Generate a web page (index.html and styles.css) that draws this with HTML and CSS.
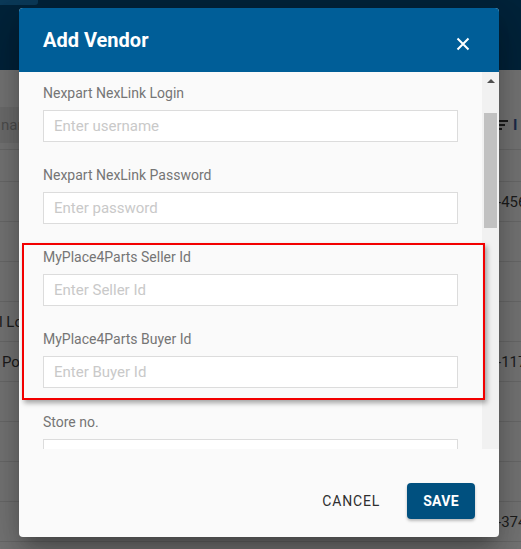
FILE: index.html
```html
<!DOCTYPE html>
<html>
<head>
<meta charset="utf-8">
<link rel="stylesheet" href="styles.css">
</head>
<body>
<div class="app">
  <div class="topbar"><div class="tab"></div></div>
  <div class="toolbar">
    <div class="search">nar</div>
    <div class="tools">
      <svg class="filter" width="11" height="10" viewBox="0 0 11 10"><rect x="0" y="0" width="11" height="2" fill="#1c1c1c"/><rect x="0" y="4" width="8" height="2" fill="#1c1c1c"/><rect x="0" y="8" width="5" height="2" fill="#1c1c1c"/></svg>
      <span class="tool-text">I</span>
    </div>
  </div>
  <div class="rows">
    <div class="row"><span class="c1"></span><span class="c2"></span></div>
    <div class="row"><span class="c1"></span><span class="c2">-456</span></div>
    <div class="row"><span class="c1"></span><span class="c2"></span></div>
    <div class="row"><span class="c1"></span><span class="c2"></span></div>
    <div class="row"><span class="c1 shift">l Lo</span><span class="c2"></span></div>
    <div class="row"><span class="c1">Pot</span><span class="c2">-117</span></div>
    <div class="row"><span class="c1"></span><span class="c2"></span></div>
    <div class="row"><span class="c1"></span><span class="c2"></span></div>
    <div class="row"><span class="c1"></span><span class="c2"></span></div>
    <div class="row"><span class="c1"></span><span class="c2">-374</span></div>
  </div>
</div>

<div class="dialog">
  <div class="dlg-head">
    <h2 class="dlg-title">Add Vendor</h2>
    <svg class="close" width="14" height="14" viewBox="0 0 14 14"><path d="M1.5 1.5 L12.5 12.5 M12.5 1.5 L1.5 12.5" stroke="#fff" stroke-width="2" fill="none"/></svg>
  </div>
  <div class="dlg-body">
    <div class="content">
      <div class="field">
        <label class="lbl">Nexpart NexLink Login</label>
        <div class="inp">Enter username</div>
      </div>
      <div class="field">
        <label class="lbl">Nexpart NexLink Password</label>
        <div class="inp">Enter password</div>
      </div>
      <div class="highlight">
        <div class="field">
          <label class="lbl">MyPlace4Parts Seller Id</label>
          <div class="inp">Enter Seller Id</div>
        </div>
        <div class="field last">
          <label class="lbl">MyPlace4Parts Buyer Id</label>
          <div class="inp">Enter Buyer Id</div>
        </div>
      </div>
      <div class="field">
        <label class="lbl">Store no.</label>
        <div class="inp">Enter store no.</div>
      </div>
    </div>
    <div class="scrollbar">
      <div class="arrow"></div>
      <div class="thumb"></div>
    </div>
  </div>
  <div class="dlg-foot">
    <button class="btn-cancel">CANCEL</button>
    <button class="btn-save">SAVE</button>
  </div>
</div>
</body>
</html>
```
FILE: styles.css
```css
* { box-sizing: border-box; }
html, body {
  margin: 0;
  width: 521px;
  height: 549px;
  overflow: hidden;
}
body {
  background: #767676;
  font-family: Roboto, "Liberation Sans", sans-serif;
  position: relative;
}

/* background app (dimmed) */
.app { width: 521px; }
.topbar {
  height: 70px;
  background: #00233a;
  position: relative;
}
.tab {
  width: 38px;
  height: 5px;
  background: #0b3a59;
  border-bottom-right-radius: 3px;
}
.toolbar {
  height: 80px;
  padding-top: 37px;
  display: flex;
  justify-content: space-between;
  border-bottom: 1px solid #6a6a6a;
}
.search {
  width: 40px;
  height: 36px;
  background: #6e6e6e;
  color: #4e4e4e;
  font-size: 15px;
  line-height: 36px;
  padding-left: 1px;
  overflow: hidden;
}
.tools {
  display: flex;
  align-items: center;
  gap: 5px;
  height: 36px;
  width: 24px;
}
.filter { flex: none; }
.tool-text {
  color: #1b2a4a;
  font-weight: 700;
  font-size: 15px;
}
.row {
  height: 40px;
  border-bottom: 1px solid #6a6a6a;
  display: flex;
  align-items: center;
  justify-content: space-between;
  color: #1c1c1c;
  font-size: 15px;
}
.row:first-child { height: 32px; }
.c1 { width: 40px; white-space: nowrap; overflow: hidden; padding-left: 2px; }
.c1.shift { padding-left: 0; text-indent: -1px; }
.c2 { width: 24px; white-space: nowrap; }

/* dialog overlay */
.dialog {
  position: absolute;
  left: 19px;
  top: 8px;
  width: 480px;
  height: 529px;
  background: #fafafa;
  border-radius: 4px;
  overflow: hidden;
  display: flex;
  flex-direction: column;
  box-shadow: 0 11px 15px -7px rgba(0,0,0,.25), 0 24px 38px 3px rgba(0,0,0,.16), 0 9px 46px 8px rgba(0,0,0,.14);
}
.dlg-head {
  height: 64px;
  flex: none;
  background: #005e98;
  display: flex;
  align-items: center;
  justify-content: space-between;
  padding: 0 29px 0 24px;
}
.dlg-title {
  margin: 0;
  color: #fff;
  font-size: 20px;
  line-height: 24px;
  font-weight: 700;
  padding-bottom: 1px;
}
.close { margin-top: 8px; }

.dlg-body {
  height: 377px;
  flex: none;
  display: flex;
  overflow: hidden;
}
.content {
  width: 463px;
  padding: 13px 24px 0 24px;
  flex: none;
}
.field { margin-bottom: 25px; }
.field.last { margin-bottom: 0; }
.lbl {
  display: block;
  font-size: 14px;
  line-height: 16px;
  color: #757575;
  margin-bottom: 9px;
}
.inp {
  height: 32px;
  width: 415px;
  background: #fff;
  border: 1px solid #dcdcdc;
  font-size: 15px;
  line-height: 30px;
  color: #c9c9c9;
  padding-left: 10px;
}
.highlight {
  position: relative;
  z-index: 2;
  margin: -6px -27px 14px -21px;
  padding: 4px 25px 10px 19px;
  border: 2px solid #f20000;
  box-shadow: 2px 3px 5px rgba(0,0,0,.35);
}
.scrollbar {
  width: 17px;
  flex: none;
  background: #f1f1f1;
  position: relative;
  display: flex;
  flex-direction: column;
  align-items: center;
}
.arrow {
  margin-top: 7px;
  width: 0;
  height: 0;
  border-left: 4px solid transparent;
  border-right: 4px solid transparent;
  border-bottom: 4px solid #505050;
}
.thumb {
  margin-top: 30px;
  width: 13px;
  height: 115px;
  background: #c1c1c1;
}

.dlg-foot {
  flex: 1;
  display: flex;
  justify-content: flex-end;
  align-items: flex-start;
  padding: 34px 24px 0 0;
}
.btn-cancel {
  font-family: inherit;
  background: none;
  border: none;
  font-size: 14px;
  font-weight: 400;
  letter-spacing: 0.8px;
  color: #2e2e2e;
  height: 36px;
  padding: 0 16px;
  margin-right: 11px;
}
.btn-save {
  font-family: inherit;
  background: #00507f;
  color: #fff;
  border: none;
  border-radius: 4px;
  height: 36px;
  width: 68px;
  font-size: 14px;
  font-weight: 700;
  letter-spacing: 0.3px;
  box-shadow: 0 2px 3px rgba(0,0,0,.25);
}
```
